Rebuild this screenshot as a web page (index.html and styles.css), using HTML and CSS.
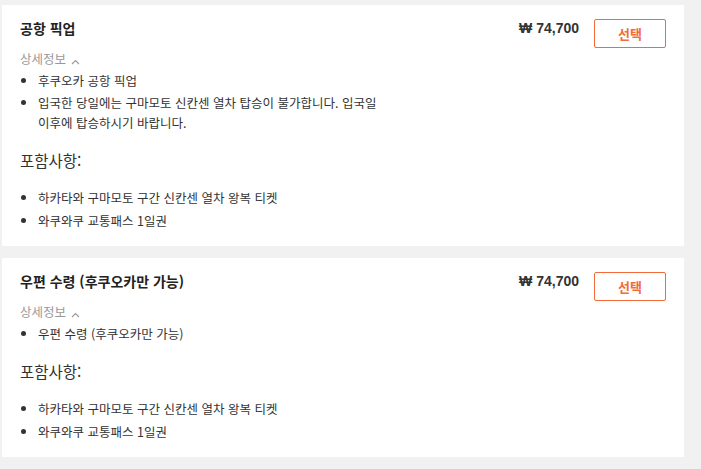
FILE: index.html
```html
<!DOCTYPE html>
<html lang="ko">
<head>
<meta charset="utf-8">
<link rel="stylesheet" href="styles.css">
</head>
<body>
<div class="list">
  <div class="card">
    <div class="head">
      <div class="title">공항 픽업</div>
      <div class="right">
        <div class="price">₩ 74,700</div>
        <button class="select">선택</button>
      </div>
    </div>
    <div class="detail">상세정보 <svg class="chev" width="9" height="6" viewBox="0 0 9 6"><path d="M1 5 L4.5 1.5 L8 5" fill="none" stroke="#999" stroke-width="1.1"/></svg></div>
    <ul class="bul">
      <li>후쿠오카 공항 픽업</li>
      <li>입국한 당일에는 구마모토 신칸센 열차 탑승이 불가합니다. 입국일<br>이후에 탑승하시기 바랍니다.</li>
    </ul>
    <div class="inc">포함사항:</div>
    <ul class="bul inc-list">
      <li>하카타와 구마모토 구간 신칸센 열차 왕복 티켓</li>
      <li>와쿠와쿠 교통패스 1일권</li>
    </ul>
  </div>
  <div class="card">
    <div class="head">
      <div class="title">우편 수령 (후쿠오카만 가능)</div>
      <div class="right">
        <div class="price">₩ 74,700</div>
        <button class="select">선택</button>
      </div>
    </div>
    <div class="detail">상세정보 <svg class="chev" width="9" height="6" viewBox="0 0 9 6"><path d="M1 5 L4.5 1.5 L8 5" fill="none" stroke="#999" stroke-width="1.1"/></svg></div>
    <ul class="bul">
      <li>우편 수령 (후쿠오카만 가능)</li>
    </ul>
    <div class="inc">포함사항:</div>
    <ul class="bul inc-list">
      <li>하카타와 구마모토 구간 신칸센 열차 왕복 티켓</li>
      <li>와쿠와쿠 교통패스 1일권</li>
    </ul>
  </div>
</div>
</body>
</html>
```
FILE: styles.css
```css
html, body {
  margin: 0;
  padding: 0;
  background: #f1f1f1;
}
body {
  font-family: "Noto Sans CJK KR", "Noto Sans", sans-serif;
  color: #333;
}
.list {
  padding: 5px 17px 0 2px;
  display: flex;
  flex-direction: column;
  gap: 12px;
}
.card {
  background: #fff;
  padding: 14px 18px 12px 18px;
}
.head {
  display: flex;
  justify-content: space-between;
  align-items: flex-start;
}
.title {
  font-size: 14px;
  font-weight: 700;
  line-height: 20px;
  margin-top: -1px;
  color: #222;
}
.right {
  display: flex;
  align-items: flex-start;
  gap: 15px;
}
.price {
  font-family: "Liberation Sans", Arial, sans-serif;
  font-weight: 700;
  font-size: 14px;
  line-height: 18px;
  color: #333;
}
.select {
  width: 72px;
  height: 29px;
  border: 1px solid #f26b3a;
  border-radius: 2px;
  background: #fff;
  color: #f26b3a;
  font-family: "Noto Sans CJK KR", sans-serif;
  font-size: 13px;
  font-weight: 700;
  padding: 0;
}
.detail {
  font-size: 12.5px;
  color: #999;
  line-height: 20px;
  margin-top: 1px;
}
.chev {
  margin-left: 1px;
  vertical-align: -1px;
}
.bul {
  margin: 2px 0 0 0;
  padding: 0 0 0 18px;
  font-size: 12.5px;
  line-height: 20px;
}
.bul li {
  margin-bottom: 2px;
}
.inc {
  font-size: 15.5px;
  line-height: 22px;
  margin-top: 16px;
  color: #333;
}
.inc-list {
  margin-top: 17px;
}
.inc-list li {
  margin-bottom: 3px;
}
```
